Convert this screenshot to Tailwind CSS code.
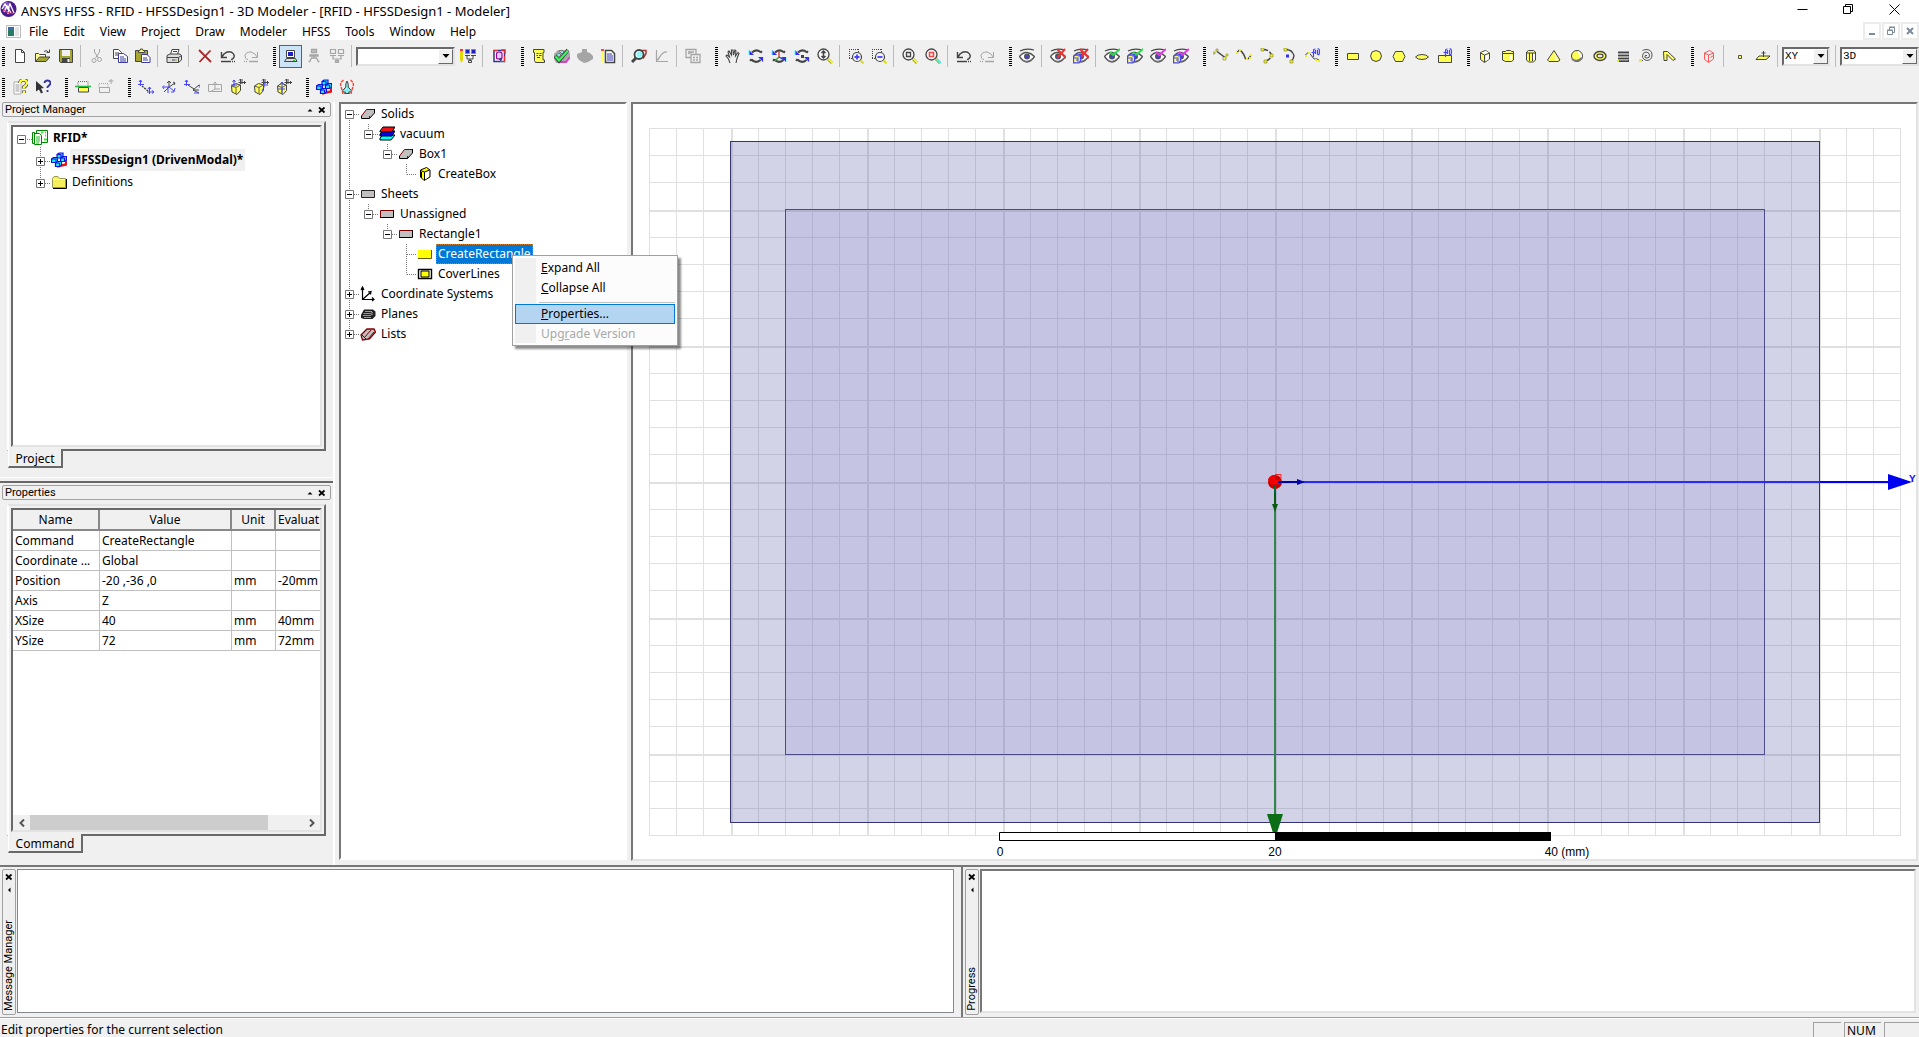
<!DOCTYPE html>
<html lang="en">
<head>
<meta charset="utf-8">
<title>ANSYS HFSS - RFID - HFSSDesign1 - 3D Modeler</title>
<script src="https://cdn.jsdelivr.net/npm/@tailwindcss/browser@4"></script>
</head>
<body class="flex h-screen flex-col overflow-hidden bg-[#f0f0f0] font-['Noto_Sans',sans-serif] text-xs text-black">

<!-- Icon sprite, 16x16 grid -->
<svg class="hidden" xmlns="http://www.w3.org/2000/svg">
  <defs>
    <symbol id="new" viewBox="0 0 16 16"><path d="M3.500 1.500h6l3 3v10h-9z" fill="#fff" stroke="#444"/><path d="M9.500 1.500v3h3" fill="none" stroke="#444"/></symbol>
    <symbol id="open" viewBox="0 0 16 16"><path d="M.5 13.500v-8h3l1 1h6v3" fill="#ffff9c" stroke="#444"/><path d="M.5 13.500l4-4.500h10.500l-4 4.500z" fill="#a5a532" stroke="#444"/><path d="M9 3.500q2-2 4.500.5M14.500 1.500v3h-3" fill="none" stroke="#444"/></symbol>
    <symbol id="save" viewBox="0 0 16 16"><path d="M1.500 1.500h13v13h-12l-1-1z" fill="#a5a532" stroke="#444"/><path d="M4 2h8v6H4z" fill="#f0f0f0"/><path d="M4 10h8v5H4z" fill="#444"/><path d="M9.500 11h2v3h-2z" fill="#fff"/></symbol>
    <symbol id="cut" viewBox="0 0 16 16"><g fill="none" stroke="#a5a5a5"><path d="M5.500 1v3l4 6M10.500 1v3l-4 6"/><circle cx="5" cy="12.500" r="2"/><circle cx="10.500" cy="11.500" r="2"/></g></symbol>
    <symbol id="copy" viewBox="0 0 16 16"><path d="M1.500 1.500h5l3 3v6h-8z" fill="#fff" stroke="#444"/><path d="M3 5h4M3 7h4" stroke="#444"/><path d="M6.500 5.500h5l4 3v6h-9z" fill="#fff" stroke="#3c3c9c"/><path d="M8 9h4M8 11h6M8 13h6" stroke="#3c3c9c"/></symbol>
    <symbol id="paste" viewBox="0 0 16 16"><path d="M.5 2.500h12v11H.5z" fill="#a5a532" stroke="#444"/><path d="M3.500 4.500h6v-2h-1.500l-.5-1.500h-2l-.5 1.500H3.500z" fill="#ffff54" stroke="#444"/><path d="M6.500 6.500h5.500l3 3v5h-8.500z" fill="#fff" stroke="#3c3c9c"/><path d="M8 10h4M8 12h5" stroke="#3c3c9c"/></symbol>
    <symbol id="print" viewBox="0 0 16 16"><path d="M4.500 6.500l1.500-5h7l-1.500 5" fill="#fff" stroke="#444"/><path d="M1 7.500l3-1.500h10l1.500 1.500v4.500L12.500 14.500H1z" fill="#ddd" stroke="#444"/><path d="M1 9.500h11.500v5M12.500 9.500l3-2M7 3.500h4M6 12h3" fill="none" stroke="#444"/><path d="M9 11.500h2v1H9z" fill="#a5a532"/></symbol>
    <symbol id="del" viewBox="0 0 16 16"><path d="M2 2l12 12M13.500 2.500L2.500 14" stroke="#a52a2a" stroke-width="1.800"/></symbol>
    <symbol id="undo" viewBox="0 0 16 16"><path d="M2 9.500q-.5 0 2-3.500 4-3.500 8-1.500 3.500 2.500 1.500 5.500-1 1.500-2.500 1.500M1.500 4v5.500H7" fill="none" stroke="#444" stroke-width="1.400"/><path d="M1 13.500h10M12 13.500h1M14 13.500h1" stroke="#444" stroke-width="1.600"/></symbol>
    <symbol id="redo" viewBox="0 0 16 16"><path d="M14 9.500q.5 0-2-3.500-4-3.500-8-1.500-3.500 2.500-1.500 5.500 1 1.500 2.500 1.500M14.500 4v5.500H9" fill="none" stroke="#a5a5a5"/><path d="M6 13.500h9M1 13.500h1M3 13.500h1" stroke="#a5a5a5" stroke-width="1.600"/></symbol>
    <symbol id="pc" viewBox="0 0 16 16"><path d="M3.500 2.500h8v7h-8z" fill="#fff" stroke="#444"/><path d="M5 4h5v4H5z" fill="#2020c0"/><path d="M1.500 13.500l2-3h9l1.500 3z" fill="#ddd" stroke="#444"/><path d="M10 12h2v1h-2z" fill="#2c2"/></symbol>
    <symbol id="pcnet" viewBox="0 0 16 16"><path d="M5.500 1.500h5v3h-5zM4 7h8v1H4z" fill="#c4c4c4" stroke="#a5a5a5" stroke-width="1.300"/><path d="M8 8v2M3.500 14l2-4h5l2 4M2.500 13.500h2M11.500 13.500h2" fill="none" stroke="#a5a5a5" stroke-width="1.300"/></symbol>
    <symbol id="pcs" viewBox="0 0 16 16"><path d="M1.500 1.500h5v4h-5zM9.500 1.500h5v4h-5zM1 7.500h6M9 7.500h6M4 8v3h8V8M8 11v3M6.500 12.500h3v2h-3z" fill="none" stroke="#a5a5a5" stroke-width="1.200"/></symbol>
    <symbol id="pcsedit" viewBox="0 0 16 16"><path d="M0 2h3v10l-1.500 3L0 12z" fill="#e0d800"/><path d="M0 1h3v2H0z" fill="#f33"/><path d="M5.500 1.500h4v4h-4zM11.500 1.500h4v4h-4z" fill="#2020c0" stroke="#888"/><path d="M5 7.500h5M11 7.500h5M7 8v3h6V8M10 11v2M8.500 12.500h3v2h-3z" fill="none" stroke="#444"/></symbol>
    <symbol id="queue" viewBox="0 0 16 16"><path d="M3 2.500h10.500v11H3z" fill="#fff" stroke="#338" stroke-width="1.500"/><path d="M2 2h5v1H3v4H2zM14 8v6H9v-1h4V8z" fill="#d33"/><path d="M10 2h4v4" fill="none" stroke="#e33" stroke-width="1.500"/><path d="M5.500 5.500q0-1.500 2.800-1.500T11 6v4q0 1-2.700 1t-2.800-1z" fill="#e4d0f8" stroke="#909" stroke-width="1.200"/><path d="M8.500 10.500l2 2" stroke="#338" stroke-width="2"/></symbol>
    <symbol id="scroll" viewBox="0 0 16 16"><path d="M2.500 1.500h10.500v3h-1v7.500h1.500v2.500H4.500L3.500 12.500V4.500h-1z" fill="#ffff54" stroke="#444"/><path d="M5.500 5.500h2M8.500 5.500h2M5.500 7.500h1.500M8 7.500h2.500M6 9.500h3" stroke="#444"/></symbol>
    <symbol id="check" viewBox="0 0 16 16"><path d="M4 2h7l5 3v5l-5 5H2L0 11V6z" fill="#aaa"/><path d="M5 3l3-1 2 2-2 2zM2 7l3-2 2 2-2 2z" fill="#7ee" stroke="#777"/><path d="M6 14h6l4-5" stroke="#c4c" stroke-width="2" fill="none"/><path d="M1 8l4 5L14 2" fill="none" stroke="#444" stroke-width="3.600"/><path d="M1.500 8.500L5 12.500 14 2.500" fill="none" stroke="#3f5" stroke-width="2"/></symbol>
    <symbol id="analyze" viewBox="0 0 16 16"><path d="M5 1h5v3l3 1 3 3v3l-5 3-4 1-5-3-2-3V6l5-2z" fill="#a5a5a5"/></symbol>
    <symbol id="report" viewBox="0 0 16 16"><path d="M1 1h3v11l-1.500 3L1 12z" fill="#ff5"/><path d="M1 1h3v2H1z" fill="#f44"/><path d="M5.500 2.500h6l3 3v9h-9z" fill="#fff" stroke="#444" stroke-width="1.500"/><path d="M7 6h5M7 8h6M7 10h6M7 12h6" stroke="#33a"/></symbol>
    <symbol id="fields" viewBox="0 0 16 16"><path d="M10 2.500h5v3l-3 5" fill="none" stroke="#a33" stroke-width="1.500"/><circle cx="8" cy="6.500" r="4.500" fill="#cff" stroke="#444" stroke-width="1.800"/><path d="M7 5h3v3H7z" fill="none" stroke="#5ee"/><path d="M1 14l4-4" stroke="#444" stroke-width="3"/></symbol>
    <symbol id="plot" viewBox="0 0 16 16"><path d="M2.500 2v11.500H14M2.500 13L7 7q3-4 6-3M4 12l3-5" fill="none" stroke="#a5a5a5" stroke-width="1.200"/></symbol>
    <symbol id="docs" viewBox="0 0 16 16"><g fill="#f0f0f0" stroke="#a5a5a5" stroke-width="1.300"><path d="M1 1.500h10v8H1z"/><path d="M3 4h6M3 6l4-2"/><path d="M6 6.500h9v8H6z"/><path d="M8 9.500h5M8 12h5" stroke-dasharray="2 1"/></g></symbol>
    <symbol id="hand" viewBox="0 0 16 16"><path d="M5 15l-1.500-4L1 8l1-1 2.500 2L3 4l1-1 2.500 4V2h1.500l.5 5 1.500-5L11 3l-.5 5 2.500-3.500 1 1-2 5L11 15" fill="none" stroke="#444" stroke-width="1.100"/></symbol>
    <symbol id="rot" viewBox="0 0 16 16"><path d="M4 4.500q4-4 8.500-.5M3.500 11.500q4 4.500 9 .5M12.500 3.500l1.500 1M3.500 12.500l-1.500-1" fill="none" stroke="#444" stroke-width="2.200"/><path d="M1 2v5h5z" fill="#33e"/><path d="M1 2v5M15 9v5" stroke="#5ff"/><path d="M15 14V9h-5z" fill="#33e"/></symbol>
    <symbol id="rotmodel" viewBox="0 0 16 16"><use href="#rot"/><path d="M8 3v6" stroke="#e33" stroke-width="1.400"/><path d="M8 9l-4 4" stroke="#3a3" stroke-width="1.400"/><path d="M8 9l5 3" stroke="#33e" stroke-width="1.400"/></symbol>
    <symbol id="rotscreen" viewBox="0 0 16 16"><use href="#rot"/><path d="M7 7h3v3H7z" fill="#444"/></symbol>
    <symbol id="lens" viewBox="0 0 16 16"><circle cx="6.500" cy="6.500" r="5.500" fill="#f4f4f4" stroke="#444" stroke-width="1.300"/><path d="M11 11l4 4" stroke="#aa3" stroke-width="3"/><path d="M11.500 11l4 4" stroke="#ff4" stroke-width="1.500"/></symbol>
    <symbol id="zoomdyn" viewBox="0 0 16 16"><use href="#lens"/><path d="M6.500 3v7M4.500 5l2-2 2 2M4.500 8l2 2 2-2" fill="none" stroke="#444" stroke-width="1.500"/></symbol>
    <symbol id="lens2" viewBox="0 0 16 16"><path d="M1 1.500h9M1.500 1v9M10.500 1v3M1 10.500h4" fill="none" stroke="#444" stroke-dasharray="1 1"/><circle cx="9" cy="9" r="4.500" fill="#f4f4f4" stroke="#444" stroke-width="1.200"/><path d="M12.500 12.500l3 3" stroke="#dd3" stroke-width="2.400"/></symbol>
    <symbol id="zin" viewBox="0 0 16 16"><use href="#lens2"/><path d="M6.500 9h5M9 6.500v5" stroke="#44f" stroke-width="1.800"/></symbol>
    <symbol id="zout" viewBox="0 0 16 16"><use href="#lens2"/><path d="M6.500 9h5" stroke="#44f" stroke-width="1.800"/></symbol>
    <symbol id="fitall" viewBox="0 0 16 16"><use href="#lens"/><path d="M4.500 4.500h4v4h-4z" fill="none" stroke="#444" stroke-width="1.300"/></symbol>
    <symbol id="fitsel" viewBox="0 0 16 16"><use href="#lens"/><path d="M4.500 4.500h4v4h-4z" fill="none" stroke="#f44" stroke-width="1.500"/><path d="M11.500 11l4 4" stroke="#4ee" stroke-width="2"/></symbol>
    <symbol id="eye" viewBox="0 0 16 16"><path d="M1 3q6-3 14-1" fill="none" stroke="#444" stroke-width="1.200"/><path d="M.5 8.500Q4 4 8 4.500t7.500 4Q12 14 8 14T.5 8.500z" fill="#fff" stroke="#555" stroke-width="1.500"/><path d="M3 12q5 3 10-1" stroke="#777" fill="none"/><circle cx="8" cy="8.500" r="3" fill="#555"/><circle cx="8" cy="9" r="1.700" fill="#44c"/></symbol>
    <symbol id="ybox" viewBox="0 0 16 16"><path d="M.5 8.500l2-1.500h5v6l-1.500 1.800H.5z" fill="#ff5" stroke="#44f" stroke-width="1.300"/><path d="M1 10h4v4M5 9.500l2-2M3 12h2" stroke="#44f" fill="none"/></symbol>
    <symbol id="eyex" viewBox="0 0 16 16"><use href="#eye"/><path d="M7 1l9 9M15 1L7 10" stroke="#e33" stroke-width="2"/></symbol>
    <symbol id="eyexb" viewBox="0 0 16 16"><use href="#eyex"/><use href="#ybox"/></symbol>
    <symbol id="eyeg" viewBox="0 0 16 16"><use href="#eye"/><path d="M6 4l3 3 7-6" fill="none" stroke="#2d4" stroke-width="2"/></symbol>
    <symbol id="eyegb" viewBox="0 0 16 16"><use href="#eyeg"/><use href="#ybox"/></symbol>
    <symbol id="eyem" viewBox="0 0 16 16"><use href="#eye"/><path d="M6 4l3 3 7-6" fill="none" stroke="#e3e" stroke-width="2"/></symbol>
    <symbol id="eyemb" viewBox="0 0 16 16"><use href="#eyem"/><use href="#ybox"/></symbol>
    <symbol id="line" viewBox="0 0 16 16"><path d="M1 5l3-3M10.500 11l4-4" stroke="#ee2" stroke-width="1.500"/><path d="M4 3.500l8 6" stroke="#444" stroke-width="1.500"/><g fill="#ff3" stroke="#664" stroke-width=".5"><path d="M0 4h2v2H0zM3 1h2v2H3zM10 9h3v3h-3zM13 6h2v2h-2z"/></g></symbol>
    <symbol id="spline" viewBox="0 0 16 16"><path d="M1 5q2-5 5-1t3 6q3 3 6-3" fill="none" stroke="#444" stroke-width="1.500"/><path d="M0 4h2v2H0zM3 1h2v2H3zM10 10h2v2h-2zM14 6h2v2h-2zM1 2h1v1H1zM13 9h2v2h-2z" fill="#ee2"/></symbol>
    <symbol id="arc" viewBox="0 0 16 16"><path d="M4 1.500q7 0 8.500 6Q12 11 7 13" fill="none" stroke="#444" stroke-width="1.500" stroke-dasharray="5 2"/><path d="M2 0h3v3H2zM11 6h3v3h-3zM5 12h3v3H5z" fill="#ee2" stroke="#664" stroke-width=".5"/></symbol>
    <symbol id="arcc" viewBox="0 0 16 16"><path d="M4 1.500q6 0 8 6-.5 4-3 5.500" fill="none" stroke="#444" stroke-width="1.300"/><path d="M2 0h3v3H2zM8 12h3v3H8z" fill="#ee2" stroke="#664" stroke-width=".5"/><path d="M4 6.500h3v3H4z" fill="#33e"/></symbol>
    <symbol id="fx" viewBox="0 0 16 16"><path d="M8.500 9V3q0-2 2-2M6.500 4.500h4M10.500 2v4M12.500 2v4q2 2 2-2t-2-3" fill="none" stroke="#44f" stroke-width="1.200"/></symbol>
    <symbol id="eqcurve" viewBox="0 0 16 16"><path d="M0 8q3-6 6-1t4 4 4 1" fill="none" stroke="#444"/><path d="M0 7h2v2H0zM3 4h2v2H3zM10 11h2v2h-2zM13 12h2v2h-2z" fill="#ee2"/><use href="#fx"/></symbol>
    <symbol id="rect" viewBox="0 0 16 16"><path d="M2.500 5.500h11v6h-11z" fill="#ffff54" stroke="#444"/></symbol>
    <symbol id="circ" viewBox="0 0 16 16"><path d="M8 2.500l4 1.500 1.500 4-1.500 4-4 1.500L4 12 2.500 8 4 4z" fill="#ffff54" stroke="#444"/></symbol>
    <symbol id="hex" viewBox="0 0 16 16"><path d="M4.500 3.500h7l2.500 5-2.500 5h-7l-2.500-5z" fill="#ffff54" stroke="#444"/></symbol>
    <symbol id="ell" viewBox="0 0 16 16"><path d="M1.500 9q2-2.500 6.500-2.500T14.500 9q-2 2.500-6.500 2.500T1.500 9z" fill="#ffff54" stroke="#444"/></symbol>
    <symbol id="eqsurf" viewBox="0 0 16 16"><path d="M1.500 7.500h13v7h-13z" fill="#ffff54" stroke="#444"/><use href="#fx"/></symbol>
    <symbol id="box" viewBox="0 0 16 16"><path d="M3.500 4.500l5-2 4 2.500v6l-5 3.500-4-3z" fill="#ffff54" stroke="#444"/><path d="M4 5l4 2 4-2-3-2zM9 8l3-2v5l-3 2z" fill="#fff"/><path d="M3.500 5l4 2 5-2M7.500 7v7" fill="none" stroke="#444"/></symbol>
    <symbol id="cyl" viewBox="0 0 16 16"><path d="M2.500 5V3.500h3l1-1h4l1 1h2V12l-2 1.500h-6L2.500 12z" fill="#ffff54" stroke="#444"/><path d="M3 5.500h10" stroke="#444"/><path d="M10 6.500h2v5.500h-2z" fill="#fff"/></symbol>
    <symbol id="prism" viewBox="0 0 16 16"><path d="M3.500 4l2-1.500h5L12.500 4v8L10.500 14h-5L3.500 12z" fill="#ffff54" stroke="#444"/><path d="M4 5h8M6.500 5v8M9.500 5v8" stroke="#444"/><path d="M10 6h2v5h-2z" fill="#fff"/></symbol>
    <symbol id="cone" viewBox="0 0 16 16"><path d="M8 2.500l6 9.500-2 1.500H3L1.500 12z" fill="#ffff54" stroke="#444"/><path d="M8.500 5l3.500 7H9z" fill="#fff"/></symbol>
    <symbol id="sphere" viewBox="0 0 16 16"><circle cx="8" cy="8" r="5.500" fill="#ffff54" stroke="#444"/><path d="M9 4q3 2 3 5" stroke="#fff" stroke-width="2" fill="none"/><path d="M3 11q5 4 10-1" stroke="#777" stroke-width="2" fill="none"/></symbol>
    <symbol id="torus" viewBox="0 0 16 16"><ellipse cx="8" cy="8" rx="6" ry="4.500" fill="#ffff54" stroke="#444" stroke-width="1.400"/><ellipse cx="8" cy="8" rx="3" ry="1.800" fill="#f0f0f0" stroke="#444" stroke-width="1.200"/></symbol>
    <symbol id="helix" viewBox="0 0 16 16"><path d="M3 4.500h11M3 7.500h11M3 10.500h11M3 13h11" stroke="#444" stroke-width="1.800"/><path d="M3 6h10M3 9h10M3 12h10" stroke="#bbb"/><path d="M2 12h2v2H2z" fill="#ee2"/></symbol>
    <symbol id="spiral" viewBox="0 0 16 16"><path d="M9 8q-1-2-2 0t2 2q3 0 2.500-3T8 4Q4.500 4.500 4.500 8T9 12.500q5-.5 5-5.500T9 1.500Q6 1.500 4.500 2.500M1 12.500h4" fill="none" stroke="#555"/><path d="M1 11h3v3H1z" fill="#ee2"/></symbol>
    <symbol id="bond" viewBox="0 0 16 16"><path d="M2.500 3.500h4l8 7.500-2.500 1.500-6-6v6h-3z" fill="#ffff54" stroke="#444"/><path d="M7 5l6 6" stroke="#fff"/></symbol>
    <symbol id="rbox" viewBox="0 0 16 16"><path d="M3.500 5l5-2.500 4 2.500v6l-5 3.500-4-3zM3.500 5l4 2 5-2M7.500 7v7M9.500 9.500l3-2" fill="none" stroke="#f55"/></symbol>
    <symbol id="point" viewBox="0 0 16 16"><path d="M6.500 7.500h3v3h-3z" fill="#ffff54" stroke="#554"/></symbol>
    <symbol id="plane" viewBox="0 0 16 16"><path d="M1 11.500l3-3.500h11l-4 3.500z" fill="#ffff54" stroke="#444"/><path d="M8.500 3v6M6.500 5h4" stroke="#444"/></symbol>
    <symbol id="helpdoc" viewBox="0 0 16 16"><path d="M2 3h7v12H2z" fill="#fff" stroke="#aaa"/><path d="M3.500 6h4M3.500 8h4M3.500 10h4M3.500 12h4" stroke="#999"/><path d="M8 4q0-3 3.500-3T15 4q0 2-3 4v1.500M12 11.500V14" fill="none" stroke="#443" stroke-width="3.600"/><path d="M8 4q0-3 3.500-3T15 4q0 2-3 4v1.500M12 12v2" fill="none" stroke="#ff4" stroke-width="2.200"/></symbol>
    <symbol id="helpcur" viewBox="0 0 16 16"><path d="M1 2l8 7-3 .5 2 4-2 1-2-4-3 2z" fill="#333"/><path d="M9.500 4q0-2.500 3-2.500t3 2.500q0 1.500-3 4v1M12.500 11v2" fill="none" stroke="#33a" stroke-width="1.800"/></symbol>
    <symbol id="sec" viewBox="0 0 16 16"><path d="M3 2.500h10v5H3z" fill="none" stroke="#666" stroke-dasharray="1 1"/><path d="M3.500 8.500h10v4.500h-10z" fill="#ffff54" stroke="#444"/><path d="M0 7.500h16" stroke="#2b4" stroke-width="1.500"/></symbol>
    <symbol id="secplus" viewBox="0 0 16 16"><path d="M1 4.500h9v4H1z" fill="none" stroke="#a5a5a5" stroke-dasharray="1 1"/><path d="M1.500 8.500h10v5h-10zM10.500 2h5M13 0v5" fill="none" stroke="#a5a5a5"/></symbol>
    <symbol id="cs1" viewBox="0 0 16 16"><path d="M2.500 7V1M0 5.500h6M1 3l1.500-2L4 3" fill="none" stroke="#44f"/><path d="M4 7l6 5" stroke="#444" stroke-dasharray="2 1" stroke-width="1.500"/><path d="M11.500 15V8M9 13h7M10 10l1.500-2L13 10M14 11.500l2 1.500-2 1.500" fill="none" stroke="#44f"/></symbol>
    <symbol id="cs2" viewBox="0 0 16 16"><path d="M8 8V2M3 13l5-5 6-4M6 4l2-2 2 2M12 3l2 1-1 2" fill="none" stroke="#444"/><path d="M8 8H2M8 8l5 4M7 8v6M3 6.500L1.500 8 3 10M14 9l-1 4H10" fill="none" stroke="#44f"/></symbol>
    <symbol id="cs3" viewBox="0 0 16 16"><path d="M2.500 7V1M0 5.500h6M1 3l1.500-2L4 3" fill="none" stroke="#44f"/><path d="M4 6l6 4M15 6l-6 5 6 3M9 11h6" fill="none" stroke="#444"/><path d="M14 7l2-1v3M10 14h5" stroke="#44f" fill="none"/></symbol>
    <symbol id="cs4" viewBox="0 0 16 16"><path d="M1.500 5.500h13v7h-13zM8 10V3M8 10h5M8 10l-4 2.500M6.500 4.500L8 3l1.500 1.500" fill="none" stroke="#a5a5a5"/></symbol>
    <symbol id="csb" viewBox="0 0 16 16"><path d="M1.500 7l4-2.500 5 1.500v5.500L7 15.500l-5-2.500z" fill="#ffff54" stroke="#444"/><path d="M6 8.500v6.500M1.500 7L6 8.500l4.500-2.500" fill="none" stroke="#665"/><path d="M10.500 5V0M8.500 3.500H16M12 0v5M14.500 2v3M9 1.500L10.500 0" fill="none" stroke="#444"/></symbol>
    <symbol id="csf1" viewBox="0 0 16 16"><use href="#csb"/><path d="M4 8V1M1 6h6M2.500 3L4 1l1.500 2" fill="none" stroke="#44f"/></symbol>
    <symbol id="csf2" viewBox="0 0 16 16"><use href="#csb"/><path d="M11 2v6l-2 4M10 6h5" fill="none" stroke="#44f"/></symbol>
    <symbol id="csf3" viewBox="0 0 16 16"><use href="#csb"/><path d="M6 14V3M2 10h7M4.500 5L6 3l1.500 2" fill="none" stroke="#44f"/></symbol>
    <symbol id="hfss" viewBox="0 0 16 16"><path d="M6 14.500l9-2 .5-4" stroke="#e11" stroke-width="2.500" fill="none"/><g fill="#19e6ff" stroke="#11d" stroke-width="1.200"><path d="M6 2.500l2-1.500h4v4l-2 1H6zM9.500 5.500l2-1h4v3.500l-2 1.500h-4zM.5 7l2-1.500h4v4L5 10.500H.5zM4.500 11l2-1.500h4v3.500l-2 1.500h-4z"/></g><path d="M6 2.500h4V6M9.500 6h4v3M.5 7H5v3M4.500 11h4v3" fill="none" stroke="#11d"/></symbol>
    <symbol id="jet" viewBox="0 0 16 16"><path d="M8 2l1.200 3v3l3 3.500V13H9.500l1 1.500h-5l1-1.500H3.800v-1.500l3-3.500V5z" fill="#8ee" stroke="#444"/><path d="M4.500 1Q.5 4 2 8T4 15M11.500 1q4 3 2.500 7t-2 7" fill="none" stroke="#f43" stroke-width="1.500" stroke-dasharray="3 1"/></symbol>

    <symbol id="project" viewBox="0 0 16 16"><path d="M4.500.5h11v12h-11z" fill="#fff" stroke="#080"/><path d="M9 2.500h2M13 2.500h1M13 5.500h1M9 9.500h1M12 9.500h3" stroke="#3e3" stroke-width="2"/><path d="M2.500 3.500h5l2 2v9h-7z" fill="#fff" stroke="#080"/><path d="M.5 2.500h2v11h-2z" fill="#fff" stroke="#080"/><path d="M4 7h4M4 9h4M4 11h4M4 13h3" stroke="#2b2"/></symbol>
    <symbol id="folder" viewBox="0 0 16 16"><path d="M1.500 13.500v-9l1.500-2h4l1.500 2h6v9z" fill="#f4ee5c" stroke="#999a50"/><path d="M2 14.500h13.500V5" fill="none" stroke="#000"/><path d="M2 5.500h12" stroke="#fff"/></symbol>
    <symbol id="solid" viewBox="0 0 16 16"><path d="M1.500 10L6.500 3.500h8v3.500L9.500 12.500h-8z" fill="#c0c0c0"/><path d="M1.500 10L6.500 3.500h8" fill="none" stroke="#800000"/><path d="M9.500 10v2.500" stroke="#a00000"/><path d="M14.500 3v4L9.500 12.500h-8V10" fill="none" stroke="#000"/></symbol>
    <symbol id="mat" viewBox="0 0 16 16"><path d="M1 12l3-3h12l-4 5H1z" fill="#0ff" stroke="#000"/><path d="M1 8l3-3h12l-3 5H1z" fill="#00f" stroke="#000"/><path d="M1 5l3-4h12l-3 5H1z" fill="#e11" stroke="#000"/></symbol>
    <symbol id="tbox" viewBox="0 0 16 16"><path d="M3.500 4l6-2.500L13 4v7l-6 3.500L3.500 11z" fill="#ff0" stroke="#000"/><path d="M8 6.500l4-2v6l-4 3z" fill="#fff"/><path d="M3.500 4.500L7.500 6l5-2M7.500 6v8M4.500 6v6" fill="none" stroke="#000"/></symbol>
    <symbol id="sheet" viewBox="0 0 16 16"><path d="M1.500 4.500h13v7h-13z" fill="#c0c0c0"/><path d="M1.500 12V4.500H15" fill="none" stroke="#800000"/><path d="M1 11.500h13.500V4" fill="none" stroke="#000"/></symbol>
    <symbol id="gsheet" viewBox="0 0 16 16"><path d="M1.500 4.500h13v7h-13z" fill="#c0c0c0" stroke="#222"/></symbol>
    <symbol id="yrect" viewBox="0 0 16 16"><path d="M1 4h13v8H1z" fill="#ff0"/><path d="M1 12.500h13.500V4" fill="none" stroke="#665500"/></symbol>
    <symbol id="cover" viewBox="0 0 16 16"><path d="M1.500 3.500h13v9h-13z" fill="#fff" stroke="#000" stroke-width="1.400"/><path d="M4 5h8v6H4z" fill="#ff0" stroke="#000"/></symbol>
    <symbol id="axes" viewBox="0 0 16 16"><path d="M2.500 2v11.500H14M3 13L11 6M1 4l1.500-3L4 4M12 11.500l2 2-2 1.500M8 6l3-.5-.5 3" fill="none" stroke="#000" stroke-width="1.200"/></symbol>
    <symbol id="planes" viewBox="0 0 16 16"><path d="M1 9l3-5.500h9l2.500 2V10l-3 3H4L1 12z" fill="#222"/><path d="M5 5.500h7M3.500 7.500h6.500l3-1M3 9.500h7l3-1.500M4 11.500h7" fill="none" stroke="#bbb" stroke-width=".8"/></symbol>
    <symbol id="lists" viewBox="0 0 16 16"><path d="M1 9l6-6h7l1.500 3-6 7-7 1z" fill="#c0c0c0" stroke="#800000" stroke-width="1.300"/><path d="M4 12l7-8M8 13l6-7M2 9l4 4" stroke="#800000" fill="none"/></symbol>
    <symbol id="plus" viewBox="0 0 9 9"><path d="M.5.5h8v8h-8z" fill="#fff" stroke="#777"/><path d="M2 4.500h5M4.500 2v5" stroke="#000"/></symbol>
    <symbol id="minus" viewBox="0 0 9 9"><path d="M.5.5h8v8h-8z" fill="#fff" stroke="#777"/><path d="M2 4.500h5" stroke="#000"/></symbol>
    <symbol id="x" viewBox="0 0 8 8"><path d="M1 1.500l5.500 5M6.500 1.500L1 6.500" stroke="#000" stroke-width="1.700"/></symbol>
    <symbol id="down" viewBox="0 0 8 8"><path d="M.5 2h7L4 6z" fill="#000"/></symbol>
  </defs>
</svg>

<header class="bg-white">
  <div class="flex h-[22px] items-start">
    <svg class="mr-1 size-[17px]" viewBox="0 0 17 17"><circle cx="8.500" cy="9" r="8" fill="#4b1a8c"/><circle cx="6.500" cy="6" r="4" fill="#8458b8"/><path d="M2 9l3-5 3 5 2-5 4 9M4 12l3-6 4 7M8 14l1-8" stroke="#fff" stroke-width="1.300" fill="none"/><path d="M3 10l6 3 5 0" stroke="#e2477c" stroke-width="1.200" fill="none"/></svg>
    <h1 class="grow text-[13px] leading-[22px] whitespace-nowrap">ANSYS HFSS - RFID - HFSSDesign1 - 3D Modeler - [RFID - HFSSDesign1 - Modeler]</h1>
    <div class="flex gap-[35px] pt-1 pr-[19px]">
      <button aria-label="Minimize"><svg class="size-[11px]" viewBox="0 0 11 11"><path d="M.5 5.500h10" stroke="#000"/></svg></button>
      <button aria-label="Restore"><svg class="size-[11px]" viewBox="0 0 11 11"><path d="M.5 2.500h7v7h-7zM2.500 2.500v-2h7v7h-2" fill="none" stroke="#000"/></svg></button>
      <button aria-label="Close"><svg class="size-[11px]" viewBox="0 0 11 11"><path d="M.5.5l10 10M10.500.5l-10 10" stroke="#000"/></svg></button>
    </div>
  </div>
  <nav class="flex h-[18px] items-center">
    <svg class="mr-2 ml-[6px] h-[13px] w-[15px]" viewBox="0 0 15 13"><path d="M.5.5h14v12H.5z" fill="#fff" stroke="#bbb"/><path d="M2 2h6v9H2z" fill="#2a7a68"/><path d="M2 2h6v3H2z" fill="#3c6aa8"/><path d="M9 2h4v9H9z" fill="#e4e4e4"/></svg>
    <div class="flex grow gap-[15px]" id="menu"></div>
    <div class="flex text-[#7a8a9a]">
      <button aria-label="Minimize document" class="size-[18px] border-2 border-[#ececec]"><svg viewBox="0 0 14 14"><path d="M4 10h6" stroke="currentColor" stroke-width="2"/></svg></button>
      <button aria-label="Restore document" class="ml-px size-[18px] border-2 border-[#ececec]"><svg viewBox="0 0 14 14"><path d="M3.500 6.500h5v4h-5zM5.500 6V3.500h5v5H9M3 6h6M5 3h6" fill="none" stroke="currentColor"/></svg></button>
      <button aria-label="Close document" class="ml-px size-[18px] border-2 border-[#ececec]"><svg viewBox="0 0 14 14"><path d="M4 4l6 6M10 4l-6 6" stroke="currentColor" stroke-width="2"/></svg></button>
    </div>
  </nav>
</header>

<div class="flex h-8 items-center" id="bar1"></div>
<div class="flex h-[30px] items-center" id="bar2"></div>

<main class="flex min-h-0 grow">
  <!-- Docked panels -->
  <div class="mr-1 flex w-[335px] flex-col border-r-2 border-white">
    <section class="flex h-[376px] flex-col border-b border-white px-[2px]">
      <div class="flex h-[15px] items-center gap-1 rounded-xs border border-[#a0a0a0] pr-1 pl-[2px]">
        <h2 class="grow font-['Roboto',sans-serif] text-[11px] leading-3">Project Manager</h2>
        <button aria-label="Collapse"><svg class="size-2" viewBox="0 0 8 8"><path d="M1.500 5.500h5L4 3z"/></svg></button>
        <button aria-label="Close"><svg class="size-2"><use href="#x"/></svg></button>
      </div>
      <div class="mx-[5px] mt-1 h-[330px] border-2 border-t-[#e3e3e3] border-l-white border-r-[#696969] border-b-[#696969] p-[2px]">
        <div class="relative h-full border-2 border-t-[#696969] border-l-[#696969] border-r-[#e3e3e3] border-b-[#e3e3e3] bg-white">
          <svg class="absolute top-0 left-0 h-24 w-16" viewBox="0 0 64 96"><path d="M14 12.500h6M27.500 20v37M32 34.500h6M32 56.500h6" fill="none" stroke="#777" stroke-dasharray="1 1"/></svg>
          <ul class="relative pl-1">
            <li class="flex h-[22px] items-center"><svg class="mt-[3px] mr-[6px] size-[9px]"><use href="#minus"/></svg><svg class="mr-[3px] size-4"><use href="#project"/></svg><span class="px-[2px] font-bold">RFID*</span></li>
            <li class="flex h-[22px] items-center pl-[19px]"><svg class="mt-[3px] mr-[6px] size-[9px]"><use href="#plus"/></svg><svg class="mr-[3px] size-4"><use href="#hfss"/></svg><span class="h-[22px] bg-[#f0f0f0] px-[2px] leading-[22px] font-bold">HFSSDesign1 (DrivenModal)*</span></li>
            <li class="flex h-[22px] items-center pl-[19px]"><svg class="mt-[3px] mr-[6px] size-[9px]"><use href="#plus"/></svg><svg class="mr-[3px] size-4"><use href="#folder"/></svg><span class="px-[2px]">Definitions</span></li>
          </ul>
        </div>
      </div>
      <button class="relative -mt-[2px] ml-[6px] h-[19px] w-[55px] border-r-2 border-b-2 border-l border-l-white border-r-[#696969] border-b-[#696969] bg-[#f0f0f0] pt-[2px] leading-4">Project</button>
    </section>

    <section class="mt-[3px] flex grow flex-col border-t-2 border-[#696969] px-[2px] pt-[2px]">
      <div class="flex h-[15px] items-center gap-1 rounded-xs border border-[#a0a0a0] pr-1 pl-[2px]">
        <h2 class="grow font-['Roboto',sans-serif] text-[11px] leading-3">Properties</h2>
        <button aria-label="Collapse"><svg class="size-2" viewBox="0 0 8 8"><path d="M1.500 5.500h5L4 3z"/></svg></button>
        <button aria-label="Close"><svg class="size-2"><use href="#x"/></svg></button>
      </div>
      <div class="mx-[5px] mt-1 h-[332px] border-2 border-t-[#e3e3e3] border-l-white border-r-[#696969] border-b-[#696969] p-[2px]">
        <div class="flex h-full flex-col border-2 border-t-[#696969] border-l-[#696969] border-r-[#e3e3e3] border-b-[#e3e3e3] bg-white">
          <div class="grow">
            <table class="w-full table-fixed border-separate border-spacing-0 [&_td]:h-5 [&_td]:border-b [&_td]:border-[#c0c0c0] [&_td]:px-[2px] [&_td]:leading-4 [&_td]:whitespace-nowrap [&_td:not(:last-child)]:border-r [&_th]:h-[21px] [&_th]:border-b-2 [&_th]:border-[#888] [&_th]:bg-[#f0f0f0] [&_th]:font-normal [&_th]:leading-4 [&_th:not(:last-child)]:border-r-2">
              <thead><tr><th class="w-[87px]">Name</th><th class="w-[132px]">Value</th><th class="w-[44px]">Unit</th><th class="pl-[2px] text-left">Evaluat</th></tr></thead>
              <tbody>
                <tr><td>Command</td><td>CreateRectangle</td><td></td><td></td></tr>
                <tr><td>Coordinate ...</td><td>Global</td><td></td><td></td></tr>
                <tr><td>Position</td><td>-20 ,-36 ,0</td><td>mm</td><td>-20mm</td></tr>
                <tr><td>Axis</td><td>Z</td><td></td><td></td></tr>
                <tr><td>XSize</td><td>40</td><td>mm</td><td>40mm</td></tr>
                <tr><td>YSize</td><td>72</td><td>mm</td><td>72mm</td></tr>
              </tbody>
            </table>
          </div>
          <div class="flex h-[15px] items-center bg-[#f0f0f0]">
            <button aria-label="Scroll left" class="flex w-[17px] justify-center"><svg class="size-2" viewBox="0 0 8 8"><path d="M6 .5L2.500 4 6 7.500" fill="none" stroke="#555" stroke-width="2"/></svg></button>
            <div class="h-full w-[238px] bg-[#cdcdcd]"></div>
            <div class="grow"></div>
            <button aria-label="Scroll right" class="flex w-[17px] justify-center"><svg class="size-2" viewBox="0 0 8 8"><path d="M2 .5L5.500 4 2 7.500" fill="none" stroke="#555" stroke-width="2"/></svg></button>
          </div>
        </div>
      </div>
      <button class="relative -mt-[2px] ml-[6px] h-[19px] w-[75px] border-r-2 border-b-2 border-l border-l-white border-r-[#696969] border-b-[#696969] bg-[#f0f0f0] pt-[2px] leading-4">Command</button>
    </section>
  </div>

  <!-- Model tree -->
  <section class="relative mr-1 mb-[5px] w-[288px] border-2 border-r-white border-b-white border-t-[#777] border-l-[#777] bg-white">
    <svg class="absolute top-0 left-0 h-60 w-24" viewBox="0 0 96 240"><path d="M8.500 10v200M27.500 20v6M46.500 40v6M65.500 60v10.500M27.500 100v6M46.500 120v6M65.500 140v30.500M13 10.500h6M32 30.500h6M51 50.500h6M66 70.500h10M13 90.500h6M32 110.500h6M51 130.500h6M66 150.500h10M66 170.500h10M13 190.500h6M13 210.500h6M13 230.500h6M8.500 210v16" fill="none" stroke="#777" stroke-dasharray="1 1"/></svg>
    <ul class="relative pl-1" id="tree"></ul>

    <!-- Context menu -->
    <div role="menu" class="absolute top-[151px] left-[171px] z-10 h-[91px] w-[166px] border border-[#a0a0a0] bg-[#fcfcfc] p-[2px] shadow-[3px_3px_2px_rgba(0,0,0,0.45)]">
      <div class="flex h-full flex-col bg-[linear-gradient(to_right,#f0f0f0_21px,#fcfcfc_21px)] text-left">
        <button role="menuitem" class="h-5 shrink-0 pl-[26px] text-left leading-[18px]"><u>E</u>xpand All</button>
        <button role="menuitem" class="h-5 shrink-0 pl-[26px] text-left leading-[18px]"><u>C</u>ollapse All</button>
        <hr class="mt-1 mb-[1px] ml-6 border-[#c0c0c0]">
        <button role="menuitem" class="h-5 shrink-0 border border-[#0078d7] bg-[#b3d5f2] pl-[25px] text-left leading-[18px]"><u>P</u>roperties...</button>
        <button role="menuitem" disabled class="h-5 shrink-0 pl-[26px] text-left leading-[18px] text-[#a8a8a8]">Upg<u>r</u>ade Version</button>
      </div>
    </div>
  </section>

  <!-- 3D view -->
  <section class="mr-[1px] mb-[4px] min-w-0 grow border-2 border-r-[#e3e3e3] border-b-[#e3e3e3] border-t-[#777] border-l-[#777] bg-white">
    <svg class="h-full w-full" viewBox="633 104 1283 755">
      <g id="grid" fill="none" stroke="#e0e0e0" shape-rendering="crispEdges"></g>
      <g shape-rendering="crispEdges">
        <path d="M730.500 141.500h1089v681h-1089z" fill="#5050a0" fill-opacity=".25" stroke="#343472"/>
        <path d="M785.500 209.500h979v545h-979z" fill="#7c7cd0" fill-opacity=".15" stroke="#4c4c8c"/>
        <path d="M1275 481h620v2h-620z" fill="#2c2cee"/><path d="M1820 481h75v2h-75z" fill="#00f"/>
        <path d="M1275 481h24v2h-24z" fill="#00a"/>
        <path d="M1274 482h2v335h-2z" fill="#31864c"/><path d="M1274 482h2v26h-2z" fill="#075c10"/>
      </g>
      <path d="M1888 474l24 8-24 8z" fill="#0000f0"/><path d="M1297 479l8 3-8 3z" fill="#00a"/>
      <path d="M1267 814h16l-6 19h-4z" fill="#0b6e16"/><path d="M1272 504h6l-3 8z" fill="#075c10"/>
      <circle cx="1275" cy="482" r="7" fill="#c80000"/><path d="M1268 480q1-5 7-5v6l-3 4z" fill="#e00"/><path d="M1273 480h6v4h-6z" fill="#f00"/><path d="M1275 474.500h6v4" stroke="#f22" fill="none"/>
      <path d="M1278 481h10v2h-10z" fill="#00a"/><path d="M1274 485h2v8h-2z" fill="#063"/>
      <text x="1909" y="482" class="font-['Liberation_Mono',monospace] text-[11px] font-bold" fill="#11f">Y</text>
      <path d="M999.500 832.500h276v8h-276z" fill="#fff" stroke="#000"/><path d="M1275 832h276v9h-276z"/>
      <g class="font-['Liberation_Sans',sans-serif] text-xs" text-anchor="middle"><text x="1000" y="856">0</text><text x="1275" y="856">20</text><text x="1567" y="856">40 (mm)</text></g>
    </svg>
  </section>
</main>

<!-- Message and progress docks -->
<div class="flex h-[152px] border-t-2 border-[#777] bg-[#f0f0f0]">
  <section class="flex w-[963px] border-r-2 border-r-[#777] pt-[2px] pr-[7px] pb-[2px] pl-[2px]">
    <div class="mr-[1px] flex w-[14px] flex-col items-center rounded-xs border border-[#a0a0a0] pt-[3px] pb-[3px]">
      <button aria-label="Close" class="leading-none"><svg class="size-2"><use href="#x"/></svg></button>
      <button aria-label="Collapse" class="mt-[5px] leading-none"><svg class="size-2" viewBox="0 0 8 8"><path d="M5.500 1.500v5L3 4z"/></svg></button>
      <h2 class="mt-auto rotate-180 font-['Roboto',sans-serif] text-[11px] leading-3 whitespace-nowrap [writing-mode:vertical-rl]">Message Manager</h2>
    </div>
    <div class="mb-[2px] grow border border-[#828790] bg-white"></div>
  </section>
  <section class="flex grow pt-[2px] pr-[3px] pb-[2px] pl-[2px]">
    <div class="mr-[1px] flex w-[14px] flex-col items-center rounded-xs border border-[#a0a0a0] pt-[3px] pb-[3px]">
      <button aria-label="Close" class="leading-none"><svg class="size-2"><use href="#x"/></svg></button>
      <button aria-label="Collapse" class="mt-[5px] leading-none"><svg class="size-2" viewBox="0 0 8 8"><path d="M5.500 1.500v5L3 4z"/></svg></button>
      <h2 class="mt-auto rotate-180 font-['Roboto',sans-serif] text-[11px] leading-3 whitespace-nowrap [writing-mode:vertical-rl]">Progress</h2>
    </div>
    <div class="mb-[2px] grow border-2 border-t-[#777] border-r-[#e3e3e3] border-b-[#e3e3e3] border-l-[#777] bg-white"></div>
  </section>
</div>

<footer class="flex h-5 border-t border-[#a0a0a0] shadow-[inset_0_1px_0_#fff]">
  <p class="grow pt-1 pl-[1px] leading-4">Edit properties for the current selection</p>
  <div class="flex gap-[3px] pt-1">
    <div class="w-7 border-t border-l border-[#a0a0a0]"></div>
    <div class="w-[37px] border-t border-l border-[#a0a0a0] pl-[2px] leading-[15px]">NUM</div>
    <div class="w-[35px] border-t border-l border-[#a0a0a0]"></div>
  </div>
</footer>

<script>
const icon = id => `<svg class="size-4"><use href="#${id}"/></svg>`;
const parts = {
  '|': '<span class="mx-[3px] h-[22px] w-px bg-[#bbb]"></span><span class="w-px"></span>',
  '#': '<span class="mr-[3px] ml-[11px] h-[19px] w-[3px] bg-[repeating-linear-gradient(#000_0_1px,transparent_1px_2px)]"></span>',
  '^': '<span class="mr-[3px] ml-[2px] h-[19px] w-[3px] bg-[repeating-linear-gradient(#000_0_1px,transparent_1px_2px)]"></span>',
};
const arrow = '<span class="pointer-events-none absolute top-[2px] right-[2px] flex h-[15px] w-[15px] items-center justify-center border border-t-white border-l-white border-r-[#696969] border-b-[#696969] bg-[#f0f0f0]"><svg class="size-2"><use href="#down"/></svg></span>';
const combo = (cls, label, value) => `<span class="${cls}"><select aria-label="${label}" class="block h-[19px] w-full appearance-none border-2 border-t-[#696969] border-l-[#696969] border-r-[#e3e3e3] border-b-[#e3e3e3] bg-white pl-[1px] font-['Liberation_Mono',monospace] text-[11px] leading-[15px]"><option>${value}</option></select>${arrow}</span>`;
parts.A = combo('relative mr-px w-[99px]', 'Design', '');
parts.B = combo('relative mr-[2px] w-12', 'Drawing plane', 'XY');
parts.C = combo('relative w-[79px]', 'Movement mode', '3D');
const build = (id, spec) => {
  document.getElementById(id).innerHTML = spec.split(' ').map(k => parts[k] ||
    `<button title="${k}" class="flex h-[23px] w-[23px] shrink-0 items-center justify-center ${k === 'pc' ? 'border border-[#0078d7] bg-[#cce4f7]' : ''}">${icon(k)}</button>`).join('');
};
build('bar1', '^ new open save | cut copy paste | print | del undo redo # pc pcnet pcs | A pcsedit | queue # scroll check analyze report | fields plot | docs # hand rot rotmodel rotscreen zoomdyn | zin zout | fitall fitsel | undo redo # eye | eyex eyexb | eyeg eyegb eyem eyemb # line spline arc arcc eqcurve # rect circ hex ell eqsurf # box cyl prism cone sphere torus helix spiral bond # rbox | point plane | B | C');
build('bar2', '^ helpdoc helpcur # sec secplus # cs1 cs2 cs3 cs4 csf1 csf2 csf3 # hfss jet');

document.getElementById('menu').innerHTML = ['File', 'Edit', 'View', 'Project', 'Draw', 'Modeler', 'HFSS', 'Tools', 'Window', 'Help']
  .map(t => `<button class="pt-[2px] leading-4">${t}</button>`).join('');

const indent = ['', 'pl-[19px]', 'pl-[38px]', 'pl-[57px]'];
document.getElementById('tree').innerHTML = [
  [0, 'minus', 'solid', 'Solids'], [1, 'minus', 'mat', 'vacuum'], [2, 'minus', 'solid', 'Box1'], [3, '', 'tbox', 'CreateBox'],
  [0, 'minus', 'gsheet', 'Sheets'], [1, 'minus', 'sheet', 'Unassigned'], [2, 'minus', 'sheet', 'Rectangle1'],
  [3, '', 'yrect', 'CreateRectangle'], [3, '', 'cover', 'CoverLines'],
  [0, 'plus', 'axes', 'Coordinate Systems'], [0, 'plus', 'planes', 'Planes'], [0, 'plus', 'lists', 'Lists'],
].map(([lv, tg, ic, text]) => `<li class="flex h-5 items-center ${indent[lv]}"><svg class="mr-[6px] size-[9px]">${tg ? `<use href="#${tg}"/>` : ''}</svg><span class="mr-[3px]">${icon(ic)}</span><span class="h-5 px-[2px] leading-[19px] ${text === 'CreateRectangle' ? 'bg-[#0078d7] text-white outline outline-dotted -outline-offset-1 outline-[#d07a2c]' : ''}">${text}</span></li>`).join('');

let g = '';
for (let i = 0; i <= 46; i++) { const x = Math.round(649 + i * 27.2) + .5; g += `<path d="M${x} 128V835" stroke-width="${i % 5 === 3 ? 2 : 1}"/>`; }
for (let i = 0; i <= 26; i++) { const y = Math.round(128 + i * 27.2) + .5; g += `<path d="M649 ${y}H1901" stroke-width="${i % 5 === 3 ? 2 : 1}"/>`; }
document.getElementById('grid').innerHTML = g;
</script>
</body>
</html>
